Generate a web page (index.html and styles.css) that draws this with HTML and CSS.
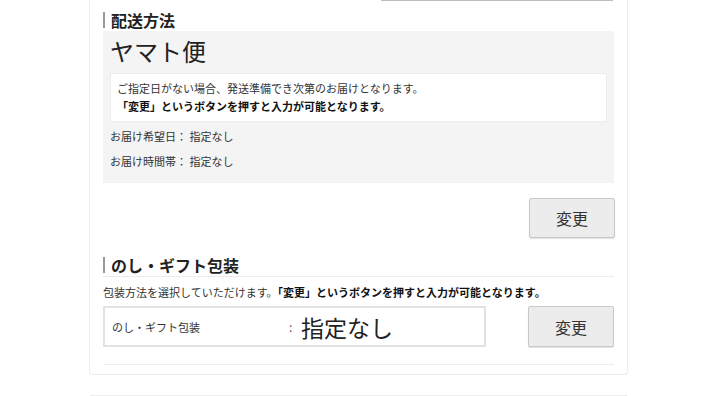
FILE: index.html
```html
<!DOCTYPE html>
<html lang="ja">
<head>
<meta charset="utf-8">
<title>配送方法</title>
<link rel="stylesheet" href="styles.css">
</head>
<body>
<div class="top-btn"></div>
<div class="card">
  <h2 class="heading">配送方法</h2>
  <div class="panel">
    <div class="carrier">ヤマト便</div>
    <div class="notice">
      <p>ご指定日がない場合、発送準備でき次第のお届けとなります。</p>
      <p class="strong">「変更」というボタンを押すと入力が可能となります。</p>
    </div>
    <p class="row">お届け希望日： 指定なし</p>
    <p class="row">お届け時間帯： 指定なし</p>
  </div>
  <div class="actions">
    <button class="btn">変更</button>
  </div>

  <h2 class="heading heading-line">のし・ギフト包装</h2>
  <p class="desc">包装方法を選択していただけます。<strong>「変更」というボタンを押すと入力が可能となります。</strong></p>
  <div class="gift-row">
    <div class="gift-box">
      <span class="gift-label">のし・ギフト包装</span>
      <span class="gift-colon">:</span>
      <span class="gift-value">指定なし</span>
    </div>
    <button class="btn btn-tall">変更</button>
  </div>
</div>
<div class="next-card"></div>
</body>
</html>
```

FILE: styles.css
```css
* { box-sizing: border-box; }

html, body {
  margin: 0;
  padding: 0;
  background: #fff;
  font-family: "Noto Sans CJK JP", "Noto Sans", sans-serif;
  color: #333;
  overflow: hidden;
}

p { margin: 0; }

.top-btn {
  margin-left: 381px;
  width: 232px;
  height: 2px;
  background: #f0f0f0;
  border-bottom: 1px solid #bdbdbd;
  margin-top: -1px;
}

.card {
  margin: -3px 0 0 89px;
  width: 539px;
  border: 1px solid #ececec;
  border-top: none;
  border-radius: 0 0 4px 4px;
  padding: 12px 13px 8px 13px;
  height: 377px;
}

.heading {
  margin: 0;
  font-size: 16px;
  font-weight: bold;
  color: #222;
  line-height: 20px;
  height: 20px;
  padding-left: 8px;
  position: relative;
}

.heading::before {
  content: "";
  position: absolute;
  left: 0;
  top: 2px;
  width: 2px;
  height: 16px;
  background: #9a9a9a;
}

.heading-line {
  margin-top: 17px;
  height: 22px;
  border-bottom: 1px solid #ececec;
}

.panel {
  margin-top: 1px;
  background: #f4f4f4;
  padding: 4px 7px 9px 7px;
}

.carrier {
  font-size: 24px;
  line-height: 32px;
  color: #222;
  margin-bottom: 6px;
}

.notice {
  background: #fff;
  border: 1px solid #ececec;
  padding: 5px 8px 6px 6px;
  font-size: 11px;
  line-height: 18px;
  color: #333;
}

.notice .strong {
  font-weight: bold;
  color: #111;
}

.row {
  font-size: 11px;
  line-height: 25px;
  color: #333;
}

.row:first-of-type { margin-top: 2px; }

.actions {
  display: flex;
  justify-content: flex-end;
  margin-top: 15px;
  margin-right: -1px;
}

.btn {
  width: 86px;
  height: 40px;
  background: #ececec;
  border: 1px solid #c9c9c9;
  border-radius: 2px;
  box-shadow: 0 1px 1px rgba(0,0,0,0.12);
  font-family: "Noto Sans CJK JP", sans-serif;
  font-size: 16px;
  color: #333;
  padding: 0;
}

.btn-tall { height: 41px; }

.desc {
  font-size: 11px;
  line-height: 18px;
  margin-top: 6px;
  color: #333;
}

.desc strong { color: #111; }

.gift-row {
  display: flex;
  justify-content: space-between;
  align-items: flex-start;
  margin-top: 5px;
  margin-right: -1px;
  padding-bottom: 17px;
  border-bottom: 1px solid #ececec;
  width: 511px;
}

.gift-box {
  width: 383px;
  height: 41px;
  border: 2px solid #e2e2e2;
  background: #fff;
  display: flex;
  align-items: center;
  padding-left: 7px;
}

.gift-label {
  width: 177px;
  font-size: 11px;
  color: #333;
}

.gift-colon {
  font-size: 12px;
  width: 12px;
  color: #555;
}

.gift-value {
  font-size: 23px;
  color: #222;
  line-height: 30px;
}

.next-card {
  margin: 20px 0 0 90px;
  width: 537px;
  border-top: 1px solid #ececec;
}
```
